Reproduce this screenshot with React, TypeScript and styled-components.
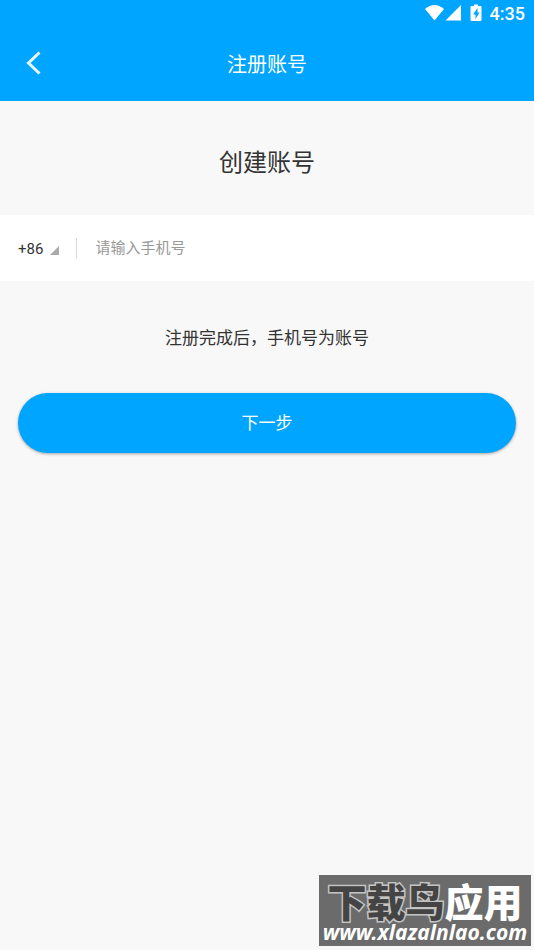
import React, { useState } from "react";
import styled, { createGlobalStyle } from "styled-components";

const blue = "#00a5ff";

const GlobalStyle = createGlobalStyle`
  * {
    box-sizing: border-box;
  }
  body {
    margin: 0;
    background: #f8f8f8;
    color: #333;
    font-family: Roboto, "Noto Sans CJK SC", sans-serif;
  }
  button, input, select {
    font: inherit;
    color: inherit;
  }
`;

const Page = styled.div`
  position: relative;
  min-height: 100vh;
  display: flex;
  flex-direction: column;
`;

const StatusBar = styled.div`
  display: flex;
  align-items: center;
  justify-content: flex-end;
  height: 28px;
  padding-right: 9px;
  background: ${blue};
  color: #fff;
`;

const StatusIcons = styled.svg`
  display: block;
  margin-right: 7px;
  margin-bottom: 2px;
`;

const Clock = styled.time`
  font-size: 18px;
  font-weight: 500;
  line-height: 28px;
`;

const Header = styled.header`
  display: grid;
  grid-template-columns: 68px 1fr 68px;
  align-items: center;
  height: 73px;
  background: ${blue};
  color: #fff;
`;

const BackButton = styled.button`
  display: flex;
  align-items: center;
  justify-content: center;
  height: 68px;
  padding: 0 2px 4px 0;
  border: 0;
  background: none;
`;

const HeaderTitle = styled.div`
  font-size: 20px;
  line-height: 28px;
  text-align: center;
`;

const Heading = styled.h1`
  margin: 0;
  padding: 44px 18px 34px;
  font-size: 24px;
  font-weight: 400;
  line-height: 36px;
  text-align: center;
`;

const PhoneRow = styled.div`
  display: flex;
  align-items: center;
  height: 66px;
  padding: 0 18px;
  background: #fff;
`;

const CodeButton = styled.button`
  display: flex;
  align-items: center;
  gap: 7px;
  padding: 1px 17px 0 0;
  border: 0;
  background: none;
  font-size: 15px;
  line-height: 22px;
`;

const Corner = styled.svg`
  display: block;
  margin-top: 4px;
`;

const Separator = styled.span`
  width: 1px;
  height: 21px;
  background: #d8d8d8;
`;

const PhoneInput = styled.input`
  flex: 1;
  min-width: 0;
  height: 40px;
  padding: 0 0 0 18px;
  border: 0;
  outline: 0;
  background: none;
  font-size: 15px;
  &::placeholder {
    color: #999;
    opacity: 1;
  }
`;

const Hint = styled.p`
  margin: 0;
  padding: 44px 18px 42px;
  font-size: 17px;
  line-height: 26px;
  text-align: center;
`;

const NextButton = styled.button`
  height: 60px;
  margin: 0 18px;
  border: 0;
  border-radius: 30px;
  background: ${blue};
  box-shadow: 0 1px 3px rgba(0, 0, 0, 0.35);
  color: #fff;
  font-size: 17px;
  line-height: 26px;
`;

const Watermark = styled.aside`
  position: absolute;
  right: 3px;
  bottom: 4px;
  display: flex;
  flex-direction: column;
  justify-content: space-between;
  width: 212px;
  height: 71px;
  padding: 7px 0 3px;
  background: #6b6b6b;
  color: #fff;
  text-align: center;
  white-space: nowrap;
`;

const WatermarkName = styled.div`
  font-family: "Noto Sans CJK SC", sans-serif;
  font-size: 39px;
  font-weight: 900;
  line-height: 36px;
`;

const Outlined = styled.span`
  color: #444;
  -webkit-text-stroke: 3px #c4c4c4;
  paint-order: stroke fill;
`;

const WatermarkSite = styled.div`
  font-family: "Noto Sans", sans-serif;
  font-size: 21px;
  font-style: italic;
  font-weight: 700;
  line-height: 22px;
`;

export default function App() {
  const [phone, setPhone] = useState("");

  return (
    <>
      <GlobalStyle />
      <Page>
        <StatusBar>
          <StatusIcons width="58" height="18" viewBox="0 0 58 18" fill="#fff" aria-hidden="true">
            <path d="M0 5Q9.500 -3 19 5L9.500 16.500Z" />
            <path d="M36 1V16.500H20.500Z" />
            <path
              fillRule="evenodd"
              d="M49 0.500h4v1.500h2.500a1 1 0 0 1 1 1V16a1 1 0 0 1-1 1h-9a1 1 0 0 1-1-1V3a1 1 0 0 1 1-1H49ZM52.500 4L48 10.500h2.500v4.500L54.500 8.500H52.500Z"
            />
          </StatusIcons>
          <Clock>4:35</Clock>
        </StatusBar>
        <Header>
          <BackButton type="button" aria-label="返回">
            <svg width="18" height="26" viewBox="0 0 18 26" fill="none" stroke="#e8f7ff" strokeWidth="3">
              <path d="M15.500 2.500L4.500 13L15.500 23.500" />
            </svg>
          </BackButton>
          <HeaderTitle>注册账号</HeaderTitle>
        </Header>
        <Heading>创建账号</Heading>
        <PhoneRow>
          <CodeButton type="button">
            +86
            <Corner width="9" height="9" viewBox="0 0 9 9" aria-hidden="true">
              <path d="M9 0V9H0Z" fill="#aaa" />
            </Corner>
          </CodeButton>
          <Separator />
          <PhoneInput
            type="tel"
            aria-label="手机号"
            placeholder="请输入手机号"
            value={phone}
            onChange={(e) => setPhone(e.target.value)}
          />
        </PhoneRow>
        <Hint>注册完成后，手机号为账号</Hint>
        <NextButton type="button">下一步</NextButton>
        <Watermark>
          <WatermarkName>
            <Outlined>下载鸟</Outlined>应用
          </WatermarkName>
          <WatermarkSite>www.xlazalnlao.com</WatermarkSite>
        </Watermark>
      </Page>
    </>
  );
}
